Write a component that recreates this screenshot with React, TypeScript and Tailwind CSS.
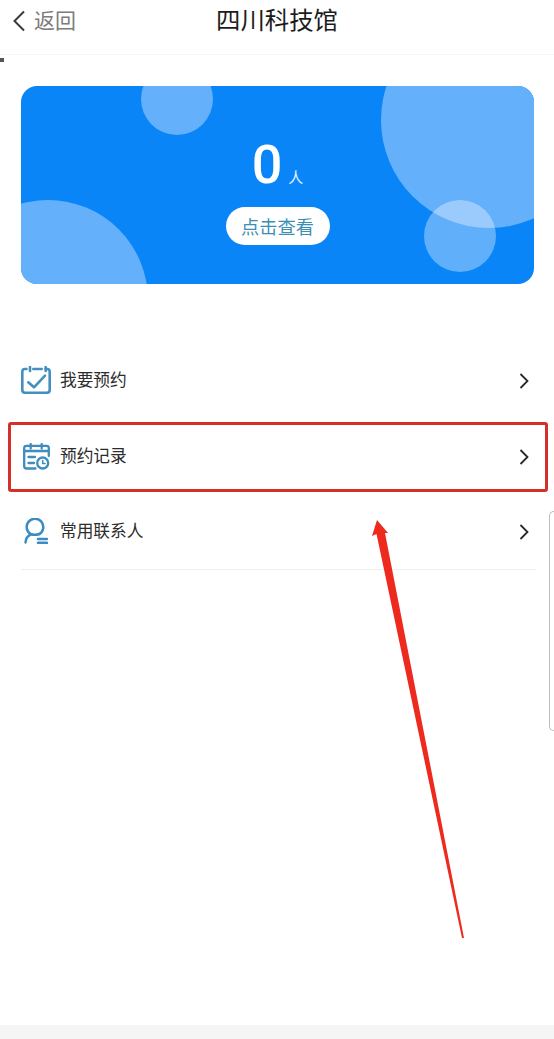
import React from "react";

const font = { fontFamily: '"Noto Sans CJK SC", "Noto Sans", sans-serif' };

function Chevron() {
  return (
    <svg width="12" height="18" viewBox="0 0 12 18" fill="none" stroke="#26282b" strokeWidth="1.8" className="mt-[1px] shrink-0">
      <path d="M2.500 2 L9.500 9 L2.500 16" />
    </svg>
  );
}

function CheckIcon() {
  return (
    <svg width="30" height="28" viewBox="0 0 30 28" fill="none" stroke="#448fbf" strokeWidth="2.600" strokeLinecap="round" strokeLinejoin="round" className="mb-[1px]">
      <path d="M5.500 3 H4 Q1.300 3 1.300 5.700 V24 Q1.300 26.700 4 26.700 H26 Q28.700 26.700 28.700 24 V5.700 Q28.700 3 26 3 H24.700" />
      <path d="M12.300 3 H20.700" />
      <path d="M9 1 V5" />
      <path d="M24.700 1 V5" />
      <path d="M7.300 16.300 L13 21.300 L24 9.700" />
    </svg>
  );
}

function CalendarIcon() {
  return (
    <svg width="28" height="27" viewBox="0 0 28 27" fill="none" stroke="#3f8dbd" strokeWidth="2.300" strokeLinecap="round" strokeLinejoin="round">
      <path d="M12.500 25.500 H3.500 Q1.200 25.500 1.200 23 V5 Q1.200 2.800 3.500 2.800 H23.500 Q25.800 2.800 25.800 5 V13" />
      <path d="M1.200 8 H25.800" />
      <path d="M7.700 1 V5.500" />
      <path d="M18.700 1 V5.500" />
      <path d="M5.500 14 H12" />
      <path d="M5.500 20 H11" />
      <circle cx="19.700" cy="20" r="5.500" />
      <path d="M19.700 17.500 V20.500 H22" strokeWidth="1.500" />
    </svg>
  );
}

function PersonIcon() {
  return (
    <svg width="24" height="26" viewBox="0 0 24 26" fill="none" stroke="#3a8cc2" strokeWidth="2.500" strokeLinecap="round" strokeLinejoin="round" className="mb-[1px]">
      <path d="M15.500 16 A8.300 8.300 0 1 0 7 16.300 Q1.800 18.500 1.500 24.500" />
      <path d="M7 16.300 Q11 17.500 15.500 16" />
      <path d="M14 21 H23" />
      <path d="M14 24.800 H23" />
    </svg>
  );
}

function Row({ icon, label, divider }: { icon: React.ReactNode; label: string; divider?: boolean }) {
  return (
    <div className={`flex h-[76px] items-center pr-[6px] ${divider ? "border-b border-[#efefef]" : ""}`}>
      <div className="flex w-[39px] shrink-0 items-center">{icon}</div>
      <span className="flex-1 pb-[2px] text-[16.700px] leading-none text-[#2c2c2c]">{label}</span>
      <Chevron />
    </div>
  );
}

export default function App() {
  return (
    <div className="relative h-[1039px] w-[554px] overflow-hidden bg-white" style={font}>
      <header className="relative flex h-[55px] items-center border-b border-[#f5f5f5] pb-[13px]">
        <div className="flex items-center pl-[12px]">
          <svg width="14" height="22" viewBox="0 0 14 22" fill="none" stroke="#3a3a3a" strokeWidth="2">
            <path d="M12 1.500 L2.500 11 L12 20.500" />
          </svg>
          <span className="mb-[2px] ml-[8px] text-[21px] leading-none text-[#7c7c7c]">返回</span>
        </div>
        <h1 className="absolute left-[216px] top-[5px] text-[24.400px] font-normal leading-[28px] text-[#1c1c1c]">四川科技馆</h1>
      </header>
      <div className="absolute left-0 top-[58px] h-[4px] w-[4px] bg-[#555555]" />

      <main className="px-[21px] pt-[31px]">
        <section className="relative flex h-[198px] w-[513px] flex-col items-center overflow-hidden rounded-[16px] bg-[#0a85f7]">
          <div className="absolute left-[120px] top-[-23px] h-[72px] w-[72px] rounded-full bg-[#65b0fb]" />
          <div className="absolute left-[360px] top-[-74px] h-[216px] w-[216px] rounded-full bg-[#65b0fb]" />
          <div className="absolute left-[-73px] top-[114px] h-[200px] w-[200px] rounded-full bg-[#65b0fb]" />
          <div className="absolute left-[403px] top-[114px] h-[72px] w-[72px] rounded-full bg-white/35" />
          <div className="relative mt-[51px] flex h-[56px] items-end">
            <span className="text-[54px] font-medium leading-[56px] text-white" style={{ fontFamily: "Roboto, sans-serif" }}>0</span>
            <span className="mb-[7px] ml-[6px] text-[15px] leading-[18px] text-[#dff0ff]">人</span>
          </div>
          <button className="relative mt-[14px] flex h-[38px] w-[104px] items-center justify-center rounded-full bg-white text-[18.200px] leading-none text-[#3b8fb2]">
            点击查看
          </button>
        </section>

        <div className="mt-[58px] w-[515px]">
          <Row icon={<CheckIcon />} label="我要预约" />
          <Row icon={<div className="flex pl-[2px]"><CalendarIcon /></div>} label="预约记录" />
          <Row icon={<div className="flex pl-[3px]"><PersonIcon /></div>} label="常用联系人" divider />
        </div>
      </main>

      <div className="absolute left-[8px] top-[422px] h-[70px] w-[540px] rounded-[3px] border-[3px] border-[#d4302a]" />

      <svg className="absolute left-0 top-0" width="554" height="1039" fill="none">
        <polygon points="377,520 388,533 385,533 464,938 462,938 376.500,534 372,536" fill="#ee2a1f" />
      </svg>

      <div className="absolute right-0 top-[511px] h-[220px] w-[5px] rounded-l-[6px] border-y border-l border-[#bdbdbd]" />

      <footer className="absolute bottom-0 left-0 h-[14px] w-full bg-[#f5f5f5]" />
    </div>
  );
}
